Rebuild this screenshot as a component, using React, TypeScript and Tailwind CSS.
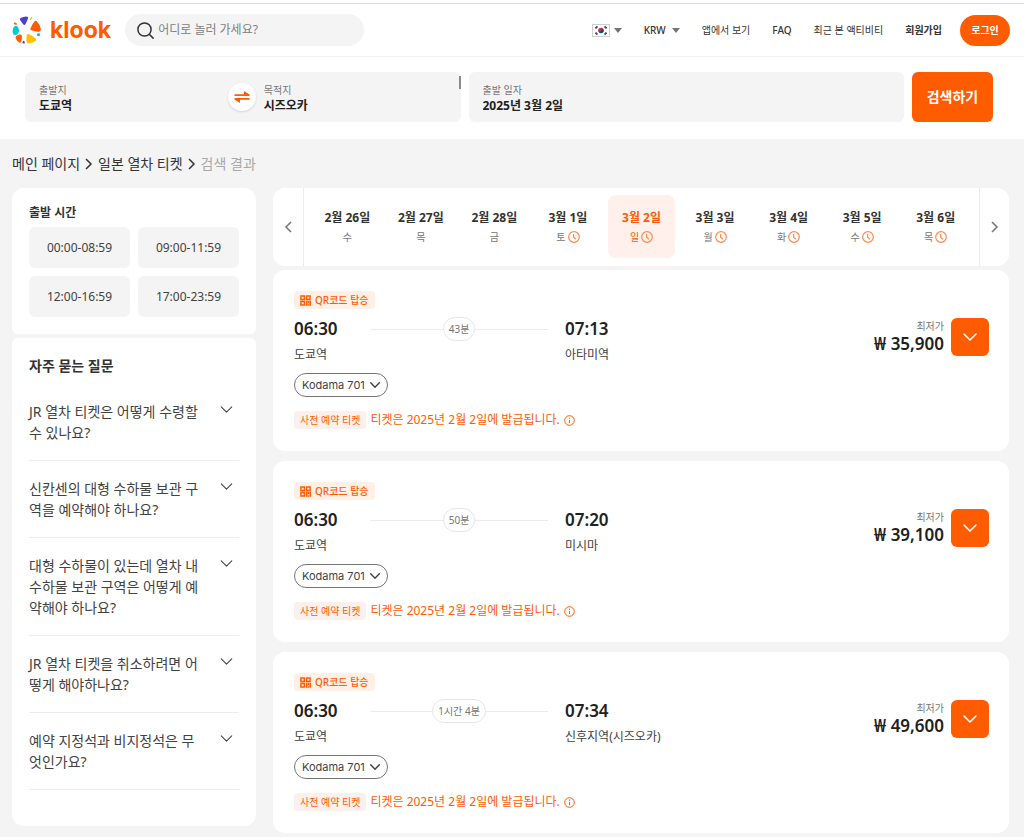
import { useState } from 'react'

const days = [
  { date: '2월 26일', day: '수', clock: false },
  { date: '2월 27일', day: '목', clock: false },
  { date: '2월 28일', day: '금', clock: false },
  { date: '3월 1일', day: '토', clock: true },
  { date: '3월 2일', day: '일', clock: true },
  { date: '3월 3일', day: '월', clock: true },
  { date: '3월 4일', day: '화', clock: true },
  { date: '3월 5일', day: '수', clock: true },
  { date: '3월 6일', day: '목', clock: true },
]

const times = ['00:00-08:59', '09:00-11:59', '12:00-16:59', '17:00-23:59']

const questions = [
  'JR 열차 티켓은 어떻게 수령할 수 있나요?',
  '신칸센의 대형 수하물 보관 구역을 예약해야 하나요?',
  '대형 수하물이 있는데 열차 내 수하물 보관 구역은 어떻게 예약해야 하나요?',
  'JR 열차 티켓을 취소하려면 어떻게 해야하나요?',
  '예약 지정석과 비지정석은 무엇인가요?',
]

const trains = [
  { start: '06:30', end: '07:13', duration: '43분', to: '아타미역', price: '35,900' },
  { start: '06:30', end: '07:20', duration: '50분', to: '미시마', price: '39,100' },
  { start: '06:30', end: '07:34', duration: '1시간 4분', to: '신후지역(시즈오카)', price: '49,600' },
]

const Chevron = ({ className, width = 1.2 }: { className: string; width?: number }) => (
  <svg className={className} viewBox="0 0 14 8" fill="none" stroke="currentColor" strokeWidth={width} strokeLinecap="round" strokeLinejoin="round">
    <path d="M1 1l6 6 6-6" />
  </svg>
)

const SideChevron = ({ flip }: { flip?: boolean }) => (
  <svg className="w-2 h-3" viewBox="0 0 8 12" fill="none" stroke="currentColor" strokeWidth="1.5">
    <path d={flip ? 'M1 1l5 5-5 5' : 'M7 1L2 6l5 5'} />
  </svg>
)

const Caret = () => (
  <svg className="w-2 h-[5px] text-[#757575]" viewBox="0 0 8 5" fill="currentColor">
    <path d="M0 0h8L4 5z" />
  </svg>
)

const Clock = () => (
  <svg className="w-3 h-3 text-[#ff8a50]" viewBox="0 0 12 12" fill="none" stroke="currentColor" strokeWidth="1.2">
    <circle cx="6" cy="6" r="5.3" />
    <path d="M5.6 3v3.2l2.4 2" />
  </svg>
)

const Logo = () => (
  <a href="#" className="flex items-center gap-[9px] shrink-0">
    <svg className="w-[29px] h-[28px]" viewBox="0 0 29 28">
      <path d="M8.6 2.1Q12 .2 15.4.7 16.6 1 16 2.6L13.6 8q-.9 1.7-2.3.5L8.4 4.6Q7.3 3 8.6 2.1z" fill="#4d40ca" />
      <path d="M19.3 1.1q1.7.2.9 1.5l-1.3 1.2q-1.2.4-.9-.8z" fill="#ffc200" />
      <path d="M22.6 5.3q1.4-1 2.4.1 3.4 3.6 3.9 7.7.2 2.5-2 2.6-3.9.3-7.700-1.400-1.400-1-.5-2.300 1.400-3.900 3.900-6.700z" fill="#ff5b00" />
      <path d="M1.9 7.2q.4-1 1.400-.7l1.500 1q.7 1-.5 1.200l-1.700-.1q-1-.3-.7-1.400z" fill="#ff5b00" />
      <path d="M2.800 10.100q1.900-.8 3 .8 1.800 2.600 1.100 5.200-.8 2.300-3.200 2.900-2.500.3-3-2.600-.6-3.700 2.100-6.300z" fill="#00cbd1" />
      <path d="M7.300 18.600q2.200-.5 2.600 1.300.4 3.400-.7 6.100-.9 1.200-2.400.3-2-1.500-3.100-4-.5-1.600.7-2.300 1.200-.8 2.900-1.400z" fill="#ff5b00" />
      <path d="M11.300 24.800q1.100-.3 1.200.6l.4 2q-1.300.4-2.400-.4-.5-1 .8-2.200z" fill="#4d40ca" />
      <path d="M14.600 19.500q.7-2.100 2.700-1.200 3.900 1.800 6.400 4.300 1.100 1.300-.2 2.300-3.200 2.400-7.200 2.400-1.800-.2-1.900-1.900-.2-3 .2-5.900z" fill="#ffc200" />
      <path d="M25.700 17.500q2.200-.6 2.500.3.200 2-1.200 2.500-2-.2-2.200-1.400 0-.9.900-1.400z" fill="#00cbd1" />
    </svg>
    <span className="font-['Inter'] font-bold text-[23px] leading-6 text-[#ff5b00]">klook</span>
  </a>
)

const Flag = () => (
  <svg className="w-[18px] h-[13px] border border-[#cfcfcf] bg-white" viewBox="0 0 18 13">
    <path d="M5.8 6.5a3.2 3.2 0 0 1 6.4 0z" fill="#cd2e3a" />
    <path d="M5.8 6.5a3.2 3.2 0 0 0 6.4 0z" fill="#0047a0" />
    <circle cx="7.4" cy="6.6" r="1.5" fill="#cd2e3a" />
    <circle cx="10.6" cy="6.4" r="1.5" fill="#0047a0" />
    <g stroke="#333" strokeWidth="2.2" strokeDasharray="1.8 .3">
      <path d="M2.5 4l2.2-2.5M15.5 4l-2.2-2.5M2.5 9l2.2 2.5M15.5 9l-2.2 2.5" />
    </g>
  </svg>
)

const Navbar = () => {
  return (
    <header className="border-t border-[#dcdcdc] mt-[3px] border-b border-b-[#f2f2f2] h-[54px] flex items-center bg-white pl-3 pr-[14px]">
      <Logo />
      <label className="ml-[14px] w-[239px] h-8 rounded-full bg-[#f4f4f4] flex items-center pl-3 gap-1">
        <svg className="w-[17px] h-[17px] shrink-0 text-[#333]" viewBox="0 0 17 17" fill="none" stroke="currentColor" strokeWidth="1.5" strokeLinecap="round">
          <circle cx="7.5" cy="7.5" r="6.6" />
          <path d="M12.5 12.5l3.6 3.6" />
        </svg>
        <input
          type="search"
          aria-label="검색"
          placeholder="어디로 놀러 가세요?"
          className="w-full min-w-0 bg-transparent text-xs outline-none placeholder:text-[#808080]"
        />
      </label>
      <nav className="ml-auto flex items-center gap-[22px] text-[10px] leading-4 text-[#333] whitespace-nowrap">
        <button aria-label="언어" className="flex items-center gap-1">
          <Flag />
          <Caret />
        </button>
        <label className="flex items-center gap-1 font-medium">
          <select aria-label="통화" className="appearance-none bg-transparent outline-none w-6">
            <option>KRW</option>
          </select>
          <Caret />
        </label>
        <a href="#">앱에서 보기</a>
        <a href="#" className="font-medium">FAQ</a>
        <a href="#">최근 본 액티비티</a>
        <a href="#" className="font-bold">회원가입</a>
        <button className="-ml-1 h-[31px] w-[50px] rounded-full bg-[#ff5b00] text-white font-bold">로그인</button>
      </nav>
    </header>
  )
}

const Field = ({ id, label, value }: { id: string; label: string; value: string }) => (
  <div className="flex-1 min-w-0 flex flex-col pt-[2px]">
    <label htmlFor={id} className="text-[10px] leading-4 text-[#757575]">{label}</label>
    <input id={id} defaultValue={value} className="w-full h-4 bg-transparent text-xs font-bold text-[#212121] outline-none" />
  </div>
)

const SearchBar = () => {
  return (
    <section className="bg-white flex gap-2 pl-[25px] pr-[31px] pt-[15px] pb-[17px]">
      <div className="relative flex-1 h-[50px] rounded-md bg-[#f4f4f4] flex items-center pl-[14px] pr-2">
        <Field id="from" label="출발지" value="도쿄역" />
        <button aria-label="출발지와 목적지 바꾸기" className="w-7 h-7 mr-2 rounded-full bg-white shadow-sm flex items-center justify-center text-[#ff5b00]">
          <svg className="w-4 h-3" viewBox="0 0 16 12" fill="currentColor">
            <path d="M.5 3.2H10V0l5.500 3.600v1.300H.5z" />
            <path d="M15.500 8.800H6V12L.5 8.400V7.100h15z" />
          </svg>
        </button>
        <Field id="to" label="목적지" value="시즈오카" />
        <span className="absolute right-0 top-1 w-[2px] h-[13px] bg-[#8a8a8a]" />
      </div>
      <div className="flex-1 h-[50px] rounded-md bg-[#f4f4f4] flex items-center pl-[14px] pr-2">
        <Field id="date" label="출발 일자" value="2025년 3월 2일" />
      </div>
      <button className="w-[81px] h-[50px] rounded-md bg-[#ff5b00] text-white text-sm font-bold">검색하기</button>
    </section>
  )
}

const Sidebar = () => {
  return (
    <aside className="w-[244px] shrink-0 flex flex-col gap-1">
      <div className="bg-white rounded-t-xl rounded-b-md px-[17px] pt-[15px] pb-[17px]">
        <h2 className="text-xs leading-5 font-bold text-[#333]">출발 시간</h2>
        <div className="mt-1 grid grid-cols-2 gap-2">
          {times.map((time) => (
            <button key={time} className="h-[41px] rounded-md bg-[#f4f4f4] text-xs text-[#424242]">{time}</button>
          ))}
        </div>
      </div>
      <div className="bg-white rounded-t-md rounded-b-xl px-[17px] pt-[18px] pb-9">
        <h2 className="text-sm leading-5 font-bold text-[#333] mb-2">자주 묻는 질문</h2>
        {questions.map((question) => (
          <button key={question} className="w-full py-[17px] border-b border-[#ececec] flex items-start justify-between text-left text-sm leading-[21px] text-[#424242]">
            <span className="w-[170px] break-all">{question}</span>
            <Chevron className="w-[13px] h-[7px] mt-[5px] mr-[6px]" />
          </button>
        ))}
      </div>
    </aside>
  )
}

const DateBar = () => {
  const [active, setActive] = useState<string>('3월 2일')
  return (
    <div className="bg-white rounded-xl h-[78px] flex text-[#757575]">
      <button aria-label="이전" className="w-[31px] shrink-0 border-r border-[#ececec] flex items-center justify-center">
        <SideChevron />
      </button>
      <div className="flex-1 grid grid-cols-9 gap-[7px] px-[10px] pt-[7px] pb-2">
        {days.map(({ date, day, clock }) => (
          <button
            key={date}
            onClick={() => setActive(date)}
            className={active === date ? 'rounded-lg bg-[#fff0ec] text-[#ff5b00] flex flex-col items-center justify-center whitespace-nowrap' : 'flex flex-col items-center justify-center whitespace-nowrap'}
          >
            <span className={active === date ? 'text-xs leading-5 font-bold' : 'text-xs leading-5 font-bold text-[#333]'}>{date}</span>
            <span className="h-[18px] flex items-center gap-[2px] text-[10px] leading-4">
              {day}
              {clock && <Clock />}
            </span>
          </button>
        ))}
      </div>
      <button aria-label="다음" className="w-[30px] shrink-0 border-l border-[#ececec] flex items-center justify-center">
        <SideChevron flip />
      </button>
    </div>
  )
}

const TrainCard = ({ train }: { train: (typeof trains)[number] }) => {
  return (
    <article className="bg-white rounded-xl pl-[21px] pr-5 pt-[21px] pb-[22px] flex justify-between">
      <div className="flex flex-col items-start">
        <span className="h-[18px] px-[6px] rounded-sm bg-[#fff0e5] flex items-center gap-1 text-[10px] leading-4 font-medium text-[#ff5b00]">
          <svg className="w-[11px] h-[11px]" viewBox="0 0 12 12" fill="none" stroke="currentColor" strokeWidth="1.6">
            <path d="M1 1h3.800v3.800H1zM7.200 1H11v3.800H7.200zM1 7.200h3.800V11H1z" />
            <path d="M7.200 6.400v5.400M9.200 6.400v2.500M9.200 10.200v1.600M11.200 6.400v5.400" />
          </svg>
          QR코드 탑승
        </span>
        <div className="mt-2 flex">
          <div className="w-[76px]">
            <p className="text-[17px] leading-6 font-semibold text-[#212121]">{train.start}</p>
            <p className="mt-1 text-xs leading-5 text-[#424242]">도쿄역</p>
          </div>
          <div className="w-[178px] h-6 flex items-center mr-[17px]">
            <span className="flex-1 h-px bg-[#ececec]" />
            <span className="h-6 px-[5px] rounded-full border border-[#e6e6e6] flex items-center text-[10px] text-[#757575]">{train.duration}</span>
            <span className="flex-1 h-px bg-[#ececec]" />
          </div>
          <div>
            <p className="text-[17px] leading-6 font-semibold text-[#212121]">{train.end}</p>
            <p className="mt-1 text-xs leading-5 text-[#424242]">{train.to}</p>
          </div>
        </div>
        <button className="mt-2 h-6 px-[7px] rounded-full border border-[#757575] flex items-center gap-[5px] font-['Inter'] text-[11px] text-[#424242]">
          Kodama 701
          <Chevron className="w-[10px] h-[6px]" width={2} />
        </button>
        <div className="mt-[14px] flex items-center gap-1 text-[#ff5b00]">
          <span className="h-[18px] px-[6px] rounded-sm bg-[#fbf0ee] text-[10px] leading-[18px]">사전 예약 티켓</span>
          <span className="text-xs leading-[18px]">티켓은 2025년 2월 2일에 발급됩니다.</span>
          <svg className="w-[11px] h-[11px]" viewBox="0 0 11 11" fill="none" stroke="currentColor">
            <circle cx="5.5" cy="5.5" r="4.8" />
            <path d="M5.5 4.8v3.4M5.5 2.6v1.2" />
          </svg>
        </div>
      </div>
      <div className="mt-[27px] flex gap-[7px] items-start">
        <div className="text-right">
          <p className="text-[10px] leading-4 text-[#757575]">최저가</p>
          <p className="text-[17px] leading-5 font-semibold text-[#212121]">₩ {train.price}</p>
        </div>
        <button aria-label="자세히 보기" className="w-[38px] h-[38px] rounded-md bg-[#ff5b00] text-white flex items-center justify-center">
          <Chevron className="w-[14px] h-2" width={1.5} />
        </button>
      </div>
    </article>
  )
}

export default function App() {
  return (
    <div className="bg-[#f4f4f4] font-['Noto_Sans','Noto_Sans_CJK_KR',sans-serif]">
      <div className="bg-white flow-root">
        <Navbar />
        <SearchBar />
      </div>
      <nav className="h-[49px] pl-3 flex items-center gap-[5px] text-sm text-[#333]">
        <a href="#">메인 페이지</a>
        <SideChevron flip />
        <a href="#">일본 열차 티켓</a>
        <SideChevron flip />
        <span className="text-[#a8a8a8]">검색 결과</span>
      </nav>
      <div className="flex items-start gap-[17px] pl-3 pr-[15px] pb-[5px]">
        <Sidebar />
        <main className="flex-1 min-w-0">
          <DateBar />
          <div className="mt-1 flex flex-col gap-[10px]">
            {trains.map((train) => (
              <TrainCard key={train.end} train={train} />
            ))}
          </div>
        </main>
      </div>
    </div>
  )
}
